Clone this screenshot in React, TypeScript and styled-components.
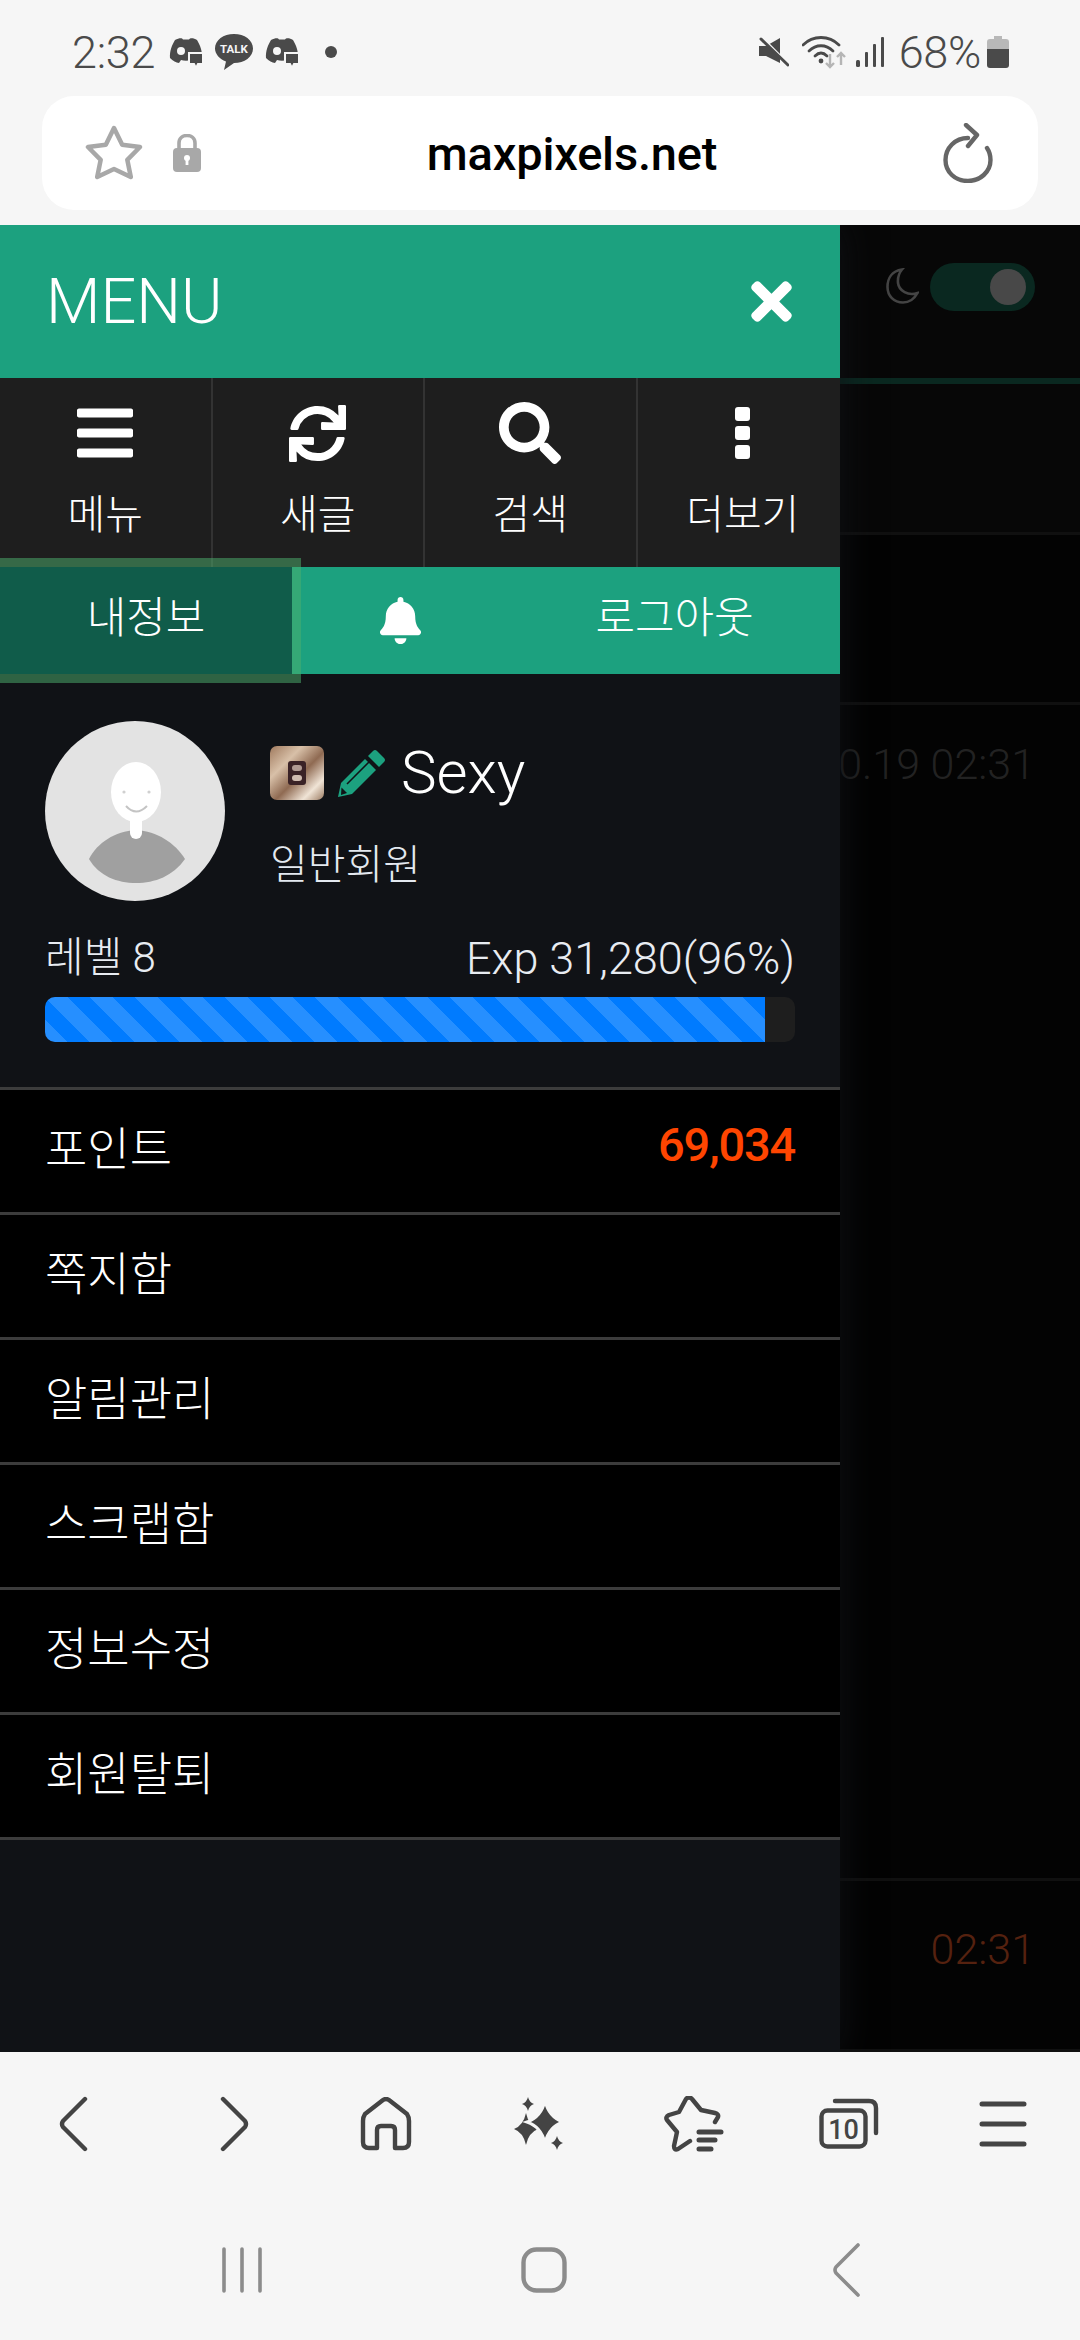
import * as React from 'react';
import styled, { createGlobalStyle } from 'styled-components';
import { FaBars, FaBell, FaSearch, FaSync, FaTimes } from 'react-icons/fa';

const TEAL = '#1ca17f';
const PANEL = '#101216';
const ICON_GREY = '#444444';
const FONT = `Roboto, "Noto Sans CJK KR", sans-serif`;

const GlobalStyle = createGlobalStyle`
  html, body {
    margin: 0;
    padding: 0;
    background: #f6f6f6;
  }
  * {
    box-sizing: border-box;
  }
`;

const Screen = styled.div`
  display: flex;
  flex-direction: column;
  width: 1080px;
  height: 2340px;
  overflow: hidden;
  background: #f6f6f6;
  font-family: ${FONT};
`;

/* status bar */

const StatusBar = styled.div`
  display: flex;
  align-items: center;
  justify-content: space-between;
  height: 96px;
  padding: 8px 71px 0 72px;
  color: #4a4a4a;
`;

const StatusGroup = styled.div`
  display: flex;
  align-items: center;
`;

const StatusText = styled.span`
  font-size: 45px;
  font-weight: 300;
  line-height: 1;
  letter-spacing: -0.3px;
`;

const StatusIcons = styled.div`
  display: flex;
  align-items: center;
  gap: 12px;
  margin-left: 14px;
`;

const Dot = styled.span`
  width: 12px;
  height: 12px;
  margin-left: 26px;
  border-radius: 50%;
  background: #4a4a4a;
`;

const Spacer = styled.span<{ $width: number }>`
  width: ${(p) => p.$width}px;
`;

const DiscordNote = () => (
  <svg width="34" height="31" viewBox="0 0 34 31">
    <path
      fill="#4a4a4a"
      d="M6 3C10 1 13 0.5 14 2.5H20C21 0.5 25 1 28 3C31 8 33.5 14 33 21C30 24 27 25.5 24 26L22 23C19 24 15 24 12 23L10 26C7 25.5 4 24 1 21C0.5 14 3 8 6 3Z"
    />
    <circle cx="12" cy="14" r="4" fill="#f6f6f6" />
    <path
      fill="#4a4a4a"
      stroke="#f6f6f6"
      strokeWidth="2"
      d="M20 16H34V27H29L27 31L25 27H20Z"
    />
  </svg>
);

const TalkBubble = () => (
  <svg width="38" height="36" viewBox="0 0 38 36">
    <path fill="#4a4a4a" d="M19 0C29.5 0 38 6 38 14.5C38 23 29.5 29 19 29L9 36L11 27.5C4.5 25 0 20 0 14.5C0 6 8.5 0 19 0Z" />
    <text x="19" y="19" textAnchor="middle" fontSize="11.5" fontWeight="700" fill="#f6f6f6" fontFamily="Roboto, sans-serif">
      TALK
    </text>
  </svg>
);

const MuteIcon = () => (
  <svg width="30" height="30" viewBox="0 0 30 30">
    <path fill="#4a4a4a" d="M0 9H7L21 1V26L7 19H0Z" />
    <path stroke="#f6f6f6" strokeWidth="3" d="M0 -2L27 25" />
    <path stroke="#4a4a4a" strokeWidth="3" strokeLinecap="round" d="M2 2L29 28" />
  </svg>
);

const WifiIcon = () => (
  <svg width="45" height="34" viewBox="0 0 45 34" fill="none">
    <g stroke="#4a4a4a" strokeWidth="2.8" strokeLinecap="round">
      <path d="M1 10C11 0 27 0 37 10" />
      <path d="M7 16C14 9 24 9 31 16" />
      <path d="M13 21C17 17 21 17 25 21" />
    </g>
    <circle cx="19" cy="26" r="2.4" fill="#4a4a4a" />
    <g stroke="#b5b5b5" strokeWidth="2.4" fill="none">
      <path d="M28 19V32M24 28L28 32L32 28" />
      <path d="M39 30V18M35 22L39 18L43 22" />
    </g>
  </svg>
);

const SignalIcon = () => (
  <svg width="28" height="30" viewBox="0 0 28 30" fill="#4a4a4a">
    <rect x="0" y="23" width="4" height="7" rx="1.5" />
    <rect x="9" y="15" width="3" height="15" rx="1" />
    <rect x="17" y="7" width="3" height="23" rx="1" />
    <rect x="25" y="0" width="3" height="30" rx="1" />
  </svg>
);

const BatteryIcon = () => (
  <svg width="22" height="32" viewBox="0 0 22 32">
    <path fill="#b8b8b8" d="M7 0H15V3H19Q22 3 22 6V13H0V6Q0 3 3 3H7Z" />
    <path fill="#4a4a4a" d="M0 13H22V29Q22 32 19 32H3Q0 32 0 29Z" />
  </svg>
);

/* address bar */

const AddressArea = styled.div`
  height: 129px;
  padding: 0 42px 15px;
`;

const AddressBar = styled.div`
  display: grid;
  grid-template-columns: auto 1fr auto;
  align-items: center;
  height: 114px;
  padding: 0 45px 0 43px;
  border-radius: 32px;
  background: #ffffff;
`;

const AddressLeft = styled.div`
  display: flex;
  align-items: center;
  gap: 30px;
`;

const Domain = styled.div`
  color: #000000;
  font-size: 47px;
  font-weight: 500;
  line-height: 1;
  text-align: center;
  letter-spacing: -0.2px;
`;

const StarOutline = () => (
  <svg width="58" height="56" viewBox="0 0 58 56" fill="none">
    <path
      stroke="#a8a8a8"
      strokeWidth="4.5"
      strokeLinejoin="round"
      d="M29 3L37.2 19.7L55 22L42.3 34.8L45.8 52L29 44L12.2 52L15.7 34.8L3 22L20.8 19.7Z"
    />
  </svg>
);

const LockIcon = () => (
  <svg width="28" height="38" viewBox="0 0 28 38">
    <path d="M6 17V9C6 -1 22 -1 22 9V17" fill="none" stroke="#a8a8a8" strokeWidth="3.6" />
    <rect y="14" width="28" height="24" rx="4" fill="#a8a8a8" />
    <circle cx="14" cy="24" r="3" fill="#ffffff" />
    <rect x="12.6" y="25" width="2.8" height="6" fill="#ffffff" />
  </svg>
);

const ReloadIcon = () => (
  <svg width="50" height="60" viewBox="0 0 50 60" fill="none">
    <g stroke="#666666" strokeWidth="4.4" strokeLinecap="round" strokeLinejoin="round">
      <path d="M25 15C12 15 2.500 25 2.500 37C2.500 49 12 58 25 58C37 58 47.500 49 47.500 37C47.500 32 46 28 44 25" />
      <path d="M23 2L34 12L25 23" />
    </g>
  </svg>
);

/* page under the drawer */

const Content = styled.div`
  position: relative;
  flex: 1;
  overflow: hidden;
  background: #030303;
`;

const PageTop = styled.div`
  display: flex;
  justify-content: flex-end;
  align-items: flex-start;
  gap: 11px;
  height: 159px;
  padding: 38px 45px 0 0;
  background: #070707;
  border-bottom: 6px solid #0a2820;
`;

const MoonSvg = styled.svg`
  margin-top: 5px;
`;

const Moon = () => (
  <MoonSvg width="33" height="36" viewBox="0 0 33 36" fill="none">
    <path
      stroke="#444444"
      strokeWidth="2.6"
      d="M16 1.500C6 3 1.500 10 1.500 19C1.500 28 8 34.500 17 34.500C23 34.500 28 31.500 31.500 25C22 28 13 23 12 15C11.500 9 13 5 16 1.500Z"
    />
  </MoonSvg>
);

const Toggle = styled.div`
  display: flex;
  align-items: center;
  justify-content: flex-end;
  width: 105px;
  height: 48px;
  padding-right: 9px;
  border-radius: 24px;
  background: #0a2820;
`;

const Knob = styled.span`
  width: 36px;
  height: 36px;
  border-radius: 50%;
  background: #484848;
`;

const PageRow = styled.div<{ $height: number; $bg: string }>`
  height: ${(p) => p.$height}px;
  background: ${(p) => p.$bg};
  border-bottom: 3px solid #101010;
`;

const PostRow = styled.div<{ $height: number; $pad: number }>`
  display: flex;
  justify-content: flex-end;
  height: ${(p) => p.$height}px;
  padding: ${(p) => p.$pad}px 45px 0 0;
  border-bottom: 3px solid #101010;
`;

const Stamp = styled.span<{ $color: string }>`
  color: ${(p) => p.$color};
  font-size: 43px;
  font-weight: 300;
  line-height: 1;
  white-space: nowrap;
`;

/* drawer */

const Drawer = styled.aside`
  position: absolute;
  top: 0;
  bottom: 0;
  left: 0;
  display: flex;
  flex-direction: column;
  width: 840px;
  background: ${PANEL};
  box-shadow: 0 0 34px rgba(16, 18, 22, 0.95);
`;

const DrawerHeader = styled.div`
  display: flex;
  align-items: center;
  justify-content: space-between;
  flex: none;
  height: 153px;
  padding: 0 39px 0 46px;
  background: ${TEAL};
  color: #ffffff;
`;

const DrawerTitle = styled.div`
  font-size: 63px;
  font-weight: 300;
  line-height: 1;
`;

const QuickGrid = styled.div`
  display: grid;
  grid-template-columns: repeat(4, 212.5px);
  flex: none;
  height: 189px;
  overflow: hidden;
  background: #1e1e1e;
`;

const QuickCell = styled.div`
  display: flex;
  flex-direction: column;
  align-items: center;
  border-right: 2px solid #333333;
  color: #ffffff;
`;

const QuickIcon = styled.div`
  display: flex;
  align-items: center;
  justify-content: center;
  height: 80px;
  margin-top: 15px;
`;

const QuickLabel = styled.div`
  margin-top: 22px;
  font-size: 41px;
  font-weight: 300;
  line-height: 1;
  white-space: nowrap;
`;

const Dots = styled.div`
  display: flex;
  flex-direction: column;
  gap: 5px;
`;

const DotBlock = styled.span`
  width: 15px;
  height: 14px;
  border-radius: 3px;
  background: #ffffff;
`;

const Tabs = styled.div`
  display: grid;
  grid-template-columns: 301px 198px 1fr;
  align-items: center;
  flex: none;
  height: 107px;
  background: ${TEAL};
  color: #ffffff;
`;

const ActiveTab = styled.div`
  display: flex;
  align-items: center;
  justify-content: center;
  height: 125px;
  margin: -9px 0;
  border: 9px solid rgba(76, 175, 110, 0.52);
  border-left: 0;
  background: #105c4a;
  background-clip: padding-box;
`;

const TabLabel = styled.span`
  margin-bottom: 5px;
  font-size: 43px;
  font-weight: 300;
  line-height: 1;
  text-align: center;
`;

const TabCell = styled.div<{ $shift?: number }>`
  display: flex;
  align-items: center;
  justify-content: center;
  padding-left: ${(p) => p.$shift ?? 0}px;
`;

const Profile = styled.div`
  flex: none;
  height: 413px;
  padding: 47px 45px 0;
`;

const ProfileTop = styled.div`
  display: flex;
  gap: 45px;
`;

const Avatar = styled.div`
  flex: none;
  width: 180px;
  height: 180px;
  overflow: hidden;
  border-radius: 50%;
  background: #e3e3e3;
`;

const ProfileInfo = styled.div`
  display: flex;
  flex-direction: column;
  padding-top: 23px;
`;

const NameRow = styled.div`
  display: flex;
  align-items: center;
  height: 58px;
`;

const Name = styled.span`
  margin-left: 15px;
  color: #ffffff;
  font-size: 60px;
  font-weight: 300;
  line-height: 1;
`;

const PencilWrap = styled.span`
  display: flex;
  margin-left: 14px;
`;

const Grade = styled.div`
  margin-top: 43px;
  color: #e4e9f0;
  font-size: 41px;
  font-weight: 300;
  line-height: 1;
`;

const LevelRow = styled.div`
  display: flex;
  align-items: center;
  justify-content: space-between;
  height: 40px;
  margin-top: 37px;
  color: #e8ecf2;
  font-weight: 300;
  line-height: 1;
`;

const LevelText = styled.span`
  font-size: 42px;
`;

const ExpText = styled.span`
  font-size: 45px;
`;

const Track = styled.div`
  height: 45px;
  margin-top: 19px;
  overflow: hidden;
  border-radius: 10px;
  background: #1e1e1e;
`;

const Fill = styled.div<{ $percent: number }>`
  width: ${(p) => p.$percent}%;
  height: 100%;
  background-color: #007bff;
  background-image: linear-gradient(
    45deg,
    rgba(255, 255, 255, 0.15) 25%,
    transparent 25%,
    transparent 50%,
    rgba(255, 255, 255, 0.15) 50%,
    rgba(255, 255, 255, 0.15) 75%,
    transparent 75%,
    transparent
  );
  background-size: 45px 45px;
`;

const MenuList = styled.div`
  flex: none;
  border-bottom: 3px solid #3c3c3c;
`;

const MenuRow = styled.div`
  display: flex;
  align-items: center;
  justify-content: space-between;
  height: 125px;
  padding: 0 45px 5px;
  border-top: 3px solid #3c3c3c;
  background: #000000;
  color: #ffffff;
  font-size: 46px;
  font-weight: 300;
  line-height: 1;
`;

const Points = styled.span`
  margin-bottom: 8px;
  color: #ff4500;
  font-size: 47px;
  font-weight: 500;
  letter-spacing: -1.2px;
`;

const DefaultAvatar = () => (
  <svg width="180" height="180" viewBox="0 0 180 180">
    <path
      fill="#a0a0a0"
      d="M44 138C52 122 70 110 91 109C112 110 130 122 140 138C128 155 110 162 91 162C72 162 54 155 44 138Z"
    />
    <ellipse cx="91" cy="71" rx="25" ry="30" fill="#ffffff" />
    <rect x="85" y="92" width="12" height="26" rx="6" fill="#ffffff" />
    <circle cx="79" cy="71" r="1.600" fill="#d0d0d0" />
    <circle cx="104" cy="71" r="1.600" fill="#d0d0d0" />
    <path d="M81 85Q91 96 102 85" fill="none" stroke="#c4c4c4" strokeWidth="2" />
  </svg>
);

const LevelBadge = () => (
  <svg width="54" height="54" viewBox="0 0 54 54">
    <defs>
      <linearGradient id="bronze" x1="0" y1="0" x2="1" y2="1">
        <stop offset="0" stopColor="#a07a5e" />
        <stop offset="0.3" stopColor="#d8c0a8" />
        <stop offset="0.55" stopColor="#8f6a52" />
        <stop offset="0.8" stopColor="#f0e4d6" />
        <stop offset="1" stopColor="#9b7b62" />
      </linearGradient>
    </defs>
    <rect width="54" height="54" rx="7" fill="url(#bronze)" />
    <rect x="18" y="15" width="18" height="24" rx="3" fill="#3a2226" />
    <rect x="22" y="19" width="10" height="6" rx="3" fill="#b09a92" />
    <rect x="22" y="29" width="10" height="6" rx="3" fill="#d0bcb0" />
  </svg>
);

const Pencil = () => (
  <svg width="48" height="48" viewBox="0 0 48 48" fill={TEAL}>
    <path d="M30 7L35 2Q37 0 39 2L46 9Q48 11 46 13L41 18Z" />
    <path d="M27 10L38 21L14 45L0 48L3 34Z" />
    <path d="M9 35L31 13" stroke={PANEL} strokeWidth="1.600" />
    <path d="M3.500 38.500L9 44L3 46Z" fill={PANEL} />
  </svg>
);

/* browser toolbar and nav bar */

const Toolbar = styled.div`
  display: grid;
  grid-template-columns: repeat(7, 1fr);
  align-items: center;
  justify-items: center;
  flex: none;
  height: 144px;
`;

const NavBar = styled.div`
  display: grid;
  grid-template-columns: repeat(3, 302px);
  align-items: center;
  justify-items: center;
  justify-content: center;
  flex: none;
  height: 144px;
  padding: 4px 0 0 8px;
`;

const ChevronSvg = styled.svg<{ $flip?: boolean; $nudge?: number }>`
  transform: translateX(${(p) => p.$nudge ?? 0}px) scaleX(${(p) => (p.$flip ? -1 : 1)});
`;

const sparkle = (cx: number, cy: number, rx: number, ry: number) => {
  const kx = rx * 0.22;
  const ky = ry * 0.22;
  return `M${cx} ${cy - ry}Q${cx + kx} ${cy - ky} ${cx + rx} ${cy}Q${cx + kx} ${cy + ky} ${cx} ${cy + ry}Q${cx - kx} ${cy + ky} ${cx - rx} ${cy}Q${cx - kx} ${cy - ky} ${cx} ${cy - ry}Z`;
};

type ChevronProps = { flip?: boolean; nudge?: number; color?: string; width?: number };

const Chevron = ({ flip, nudge, color = ICON_GREY, width = 4.400 }: ChevronProps) => (
  <ChevronSvg $flip={flip} $nudge={nudge} width="30" height="56" viewBox="0 0 30 56" fill="none">
    <path stroke={color} strokeWidth={width} strokeLinecap="round" strokeLinejoin="round" d="M27 3L5 25Q3 28 5 31L27 53" />
  </ChevronSvg>
);

const HomeIcon = () => (
  <svg width="52" height="54" viewBox="0 0 52 54" fill="none">
    <path
      stroke={ICON_GREY}
      strokeWidth="4.400"
      strokeLinejoin="round"
      d="M17 51H9Q3 51 3 45V24Q3 20 5 17L23 3Q26 1 29 3L47 17Q49 20 49 24V45Q49 51 43 51H35V33Q35 29 31 29H21Q17 29 17 33Z"
    />
  </svg>
);

const SparkleIcon = () => (
  <svg width="52" height="54" viewBox="0 0 52 54" fill={ICON_GREY}>
    <path d={sparkle(12, 32, 12, 16)} />
    <path d={sparkle(31, 25, 18, 21)} stroke="#f6f6f6" strokeWidth="3" />
    <path d={sparkle(14, 7, 6, 7)} />
    <path d={sparkle(43, 46, 6, 7)} />
  </svg>
);

const StarListIcon = () => (
  <svg width="60" height="56" viewBox="0 0 60 56" fill="none">
    <g stroke={ICON_GREY} strokeLinecap="round" strokeLinejoin="round">
      <path
        strokeWidth="4.400"
        d="M51 26L54 21Q55 18 51 17L37 14L28 3Q25 0 22 3L15 16L5 19Q1 21 3 24L13 36L10 50Q10 55 14 53L26 45"
      />
      <path strokeWidth="5" d="M35 36H57M35 44H51M35 53H47" />
    </g>
  </svg>
);

const TabsIcon = () => (
  <svg width="60" height="52" viewBox="0 0 60 52" fill="none">
    <rect x="2.500" y="12.500" width="44" height="36" rx="6" stroke={ICON_GREY} strokeWidth="4.400" />
    <path d="M16 3H50Q57 3 57 10V35" stroke={ICON_GREY} strokeWidth="4.400" strokeLinecap="round" />
    <text x="24.500" y="41" textAnchor="middle" fontSize="27" fontWeight="500" fill={ICON_GREY} fontFamily="Roboto, sans-serif">
      10
    </text>
  </svg>
);

const MenuIcon = () => (
  <svg width="48" height="46" viewBox="0 0 48 46" fill="none">
    <path stroke={ICON_GREY} strokeWidth="5" strokeLinecap="round" d="M3 3H45M3 23H45M3 43H45" />
  </svg>
);

const RecentsIcon = () => (
  <svg width="40" height="46" viewBox="0 0 40 46" fill="none">
    <path stroke="#8c8c8c" strokeWidth="3.600" strokeLinecap="round" d="M2 2V44M20 2V44M38 2V44" />
  </svg>
);

const HomeButtonIcon = () => (
  <svg width="46" height="46" viewBox="0 0 46 46" fill="none">
    <rect x="2.500" y="2.500" width="41" height="41" rx="13" stroke="#8c8c8c" strokeWidth="4.400" />
  </svg>
);

const MENU_ITEMS = ['쪽지함', '알림관리', '스크랩함', '정보수정', '회원탈퇴'];

export default function App(): JSX.Element {
  return (
    <Screen>
      <GlobalStyle />
      <StatusBar>
        <StatusGroup>
          <StatusText>2:32</StatusText>
          <StatusIcons>
            <DiscordNote />
            <TalkBubble />
            <DiscordNote />
          </StatusIcons>
          <Dot />
        </StatusGroup>
        <StatusGroup>
          <MuteIcon />
          <Spacer $width={13} />
          <WifiIcon />
          <Spacer $width={9} />
          <SignalIcon />
          <Spacer $width={15} />
          <StatusText>68%</StatusText>
          <Spacer $width={6} />
          <BatteryIcon />
        </StatusGroup>
      </StatusBar>

      <AddressArea>
        <AddressBar>
          <AddressLeft>
            <StarOutline />
            <LockIcon />
          </AddressLeft>
          <Domain>maxpixels.net</Domain>
          <ReloadIcon />
        </AddressBar>
      </AddressArea>

      <Content>
        <PageTop>
          <Moon />
          <Toggle>
            <Knob />
          </Toggle>
        </PageTop>
        <PageRow $height={151} $bg="#070707" />
        <PostRow $height={170} $pad={0} />
        <PostRow $height={1176} $pad={38}>
          <Stamp $color="#222222">2024.10.19 02:31</Stamp>
        </PostRow>
        <PostRow $height={171} $pad={47}>
          <Stamp $color="#55210f">02:31</Stamp>
        </PostRow>

        <Drawer>
          <DrawerHeader>
            <DrawerTitle>MENU</DrawerTitle>
            <FaTimes size={59} />
          </DrawerHeader>
          <QuickGrid>
            <QuickCell>
              <QuickIcon>
                <FaBars size={64} />
              </QuickIcon>
              <QuickLabel>메뉴</QuickLabel>
            </QuickCell>
            <QuickCell>
              <QuickIcon>
                <FaSync size={57} />
              </QuickIcon>
              <QuickLabel>새글</QuickLabel>
            </QuickCell>
            <QuickCell>
              <QuickIcon>
                <FaSearch size={62} />
              </QuickIcon>
              <QuickLabel>검색</QuickLabel>
            </QuickCell>
            <QuickCell>
              <QuickIcon>
                <Dots>
                  <DotBlock />
                  <DotBlock />
                  <DotBlock />
                </Dots>
              </QuickIcon>
              <QuickLabel>더보기</QuickLabel>
            </QuickCell>
          </QuickGrid>
          <Tabs>
            <ActiveTab>
              <TabLabel>내정보</TabLabel>
            </ActiveTab>
            <TabCell>
              <FaBell size={47} />
            </TabCell>
            <TabCell $shift={10}>
              <TabLabel>로그아웃</TabLabel>
            </TabCell>
          </Tabs>
          <Profile>
            <ProfileTop>
              <Avatar>
                <DefaultAvatar />
              </Avatar>
              <ProfileInfo>
                <NameRow>
                  <LevelBadge />
                  <PencilWrap>
                    <Pencil />
                  </PencilWrap>
                  <Name>Sexy</Name>
                </NameRow>
                <Grade>일반회원</Grade>
              </ProfileInfo>
            </ProfileTop>
            <LevelRow>
              <LevelText>레벨 8</LevelText>
              <ExpText>Exp 31,280(96%)</ExpText>
            </LevelRow>
            <Track>
              <Fill $percent={96} />
            </Track>
          </Profile>
          <MenuList>
            <MenuRow>
              <span>포인트</span>
              <Points>69,034</Points>
            </MenuRow>
            {MENU_ITEMS.map((item) => (
              <MenuRow key={item}>{item}</MenuRow>
            ))}
          </MenuList>
        </Drawer>
      </Content>

      <Toolbar>
        <Chevron nudge={-4} />
        <Chevron flip nudge={4} />
        <HomeIcon />
        <SparkleIcon />
        <StarListIcon />
        <TabsIcon />
        <MenuIcon />
      </Toolbar>
      <NavBar>
        <RecentsIcon />
        <HomeButtonIcon />
        <Chevron color="#8c8c8c" width={3.600} />
      </NavBar>
    </Screen>
  );
}
